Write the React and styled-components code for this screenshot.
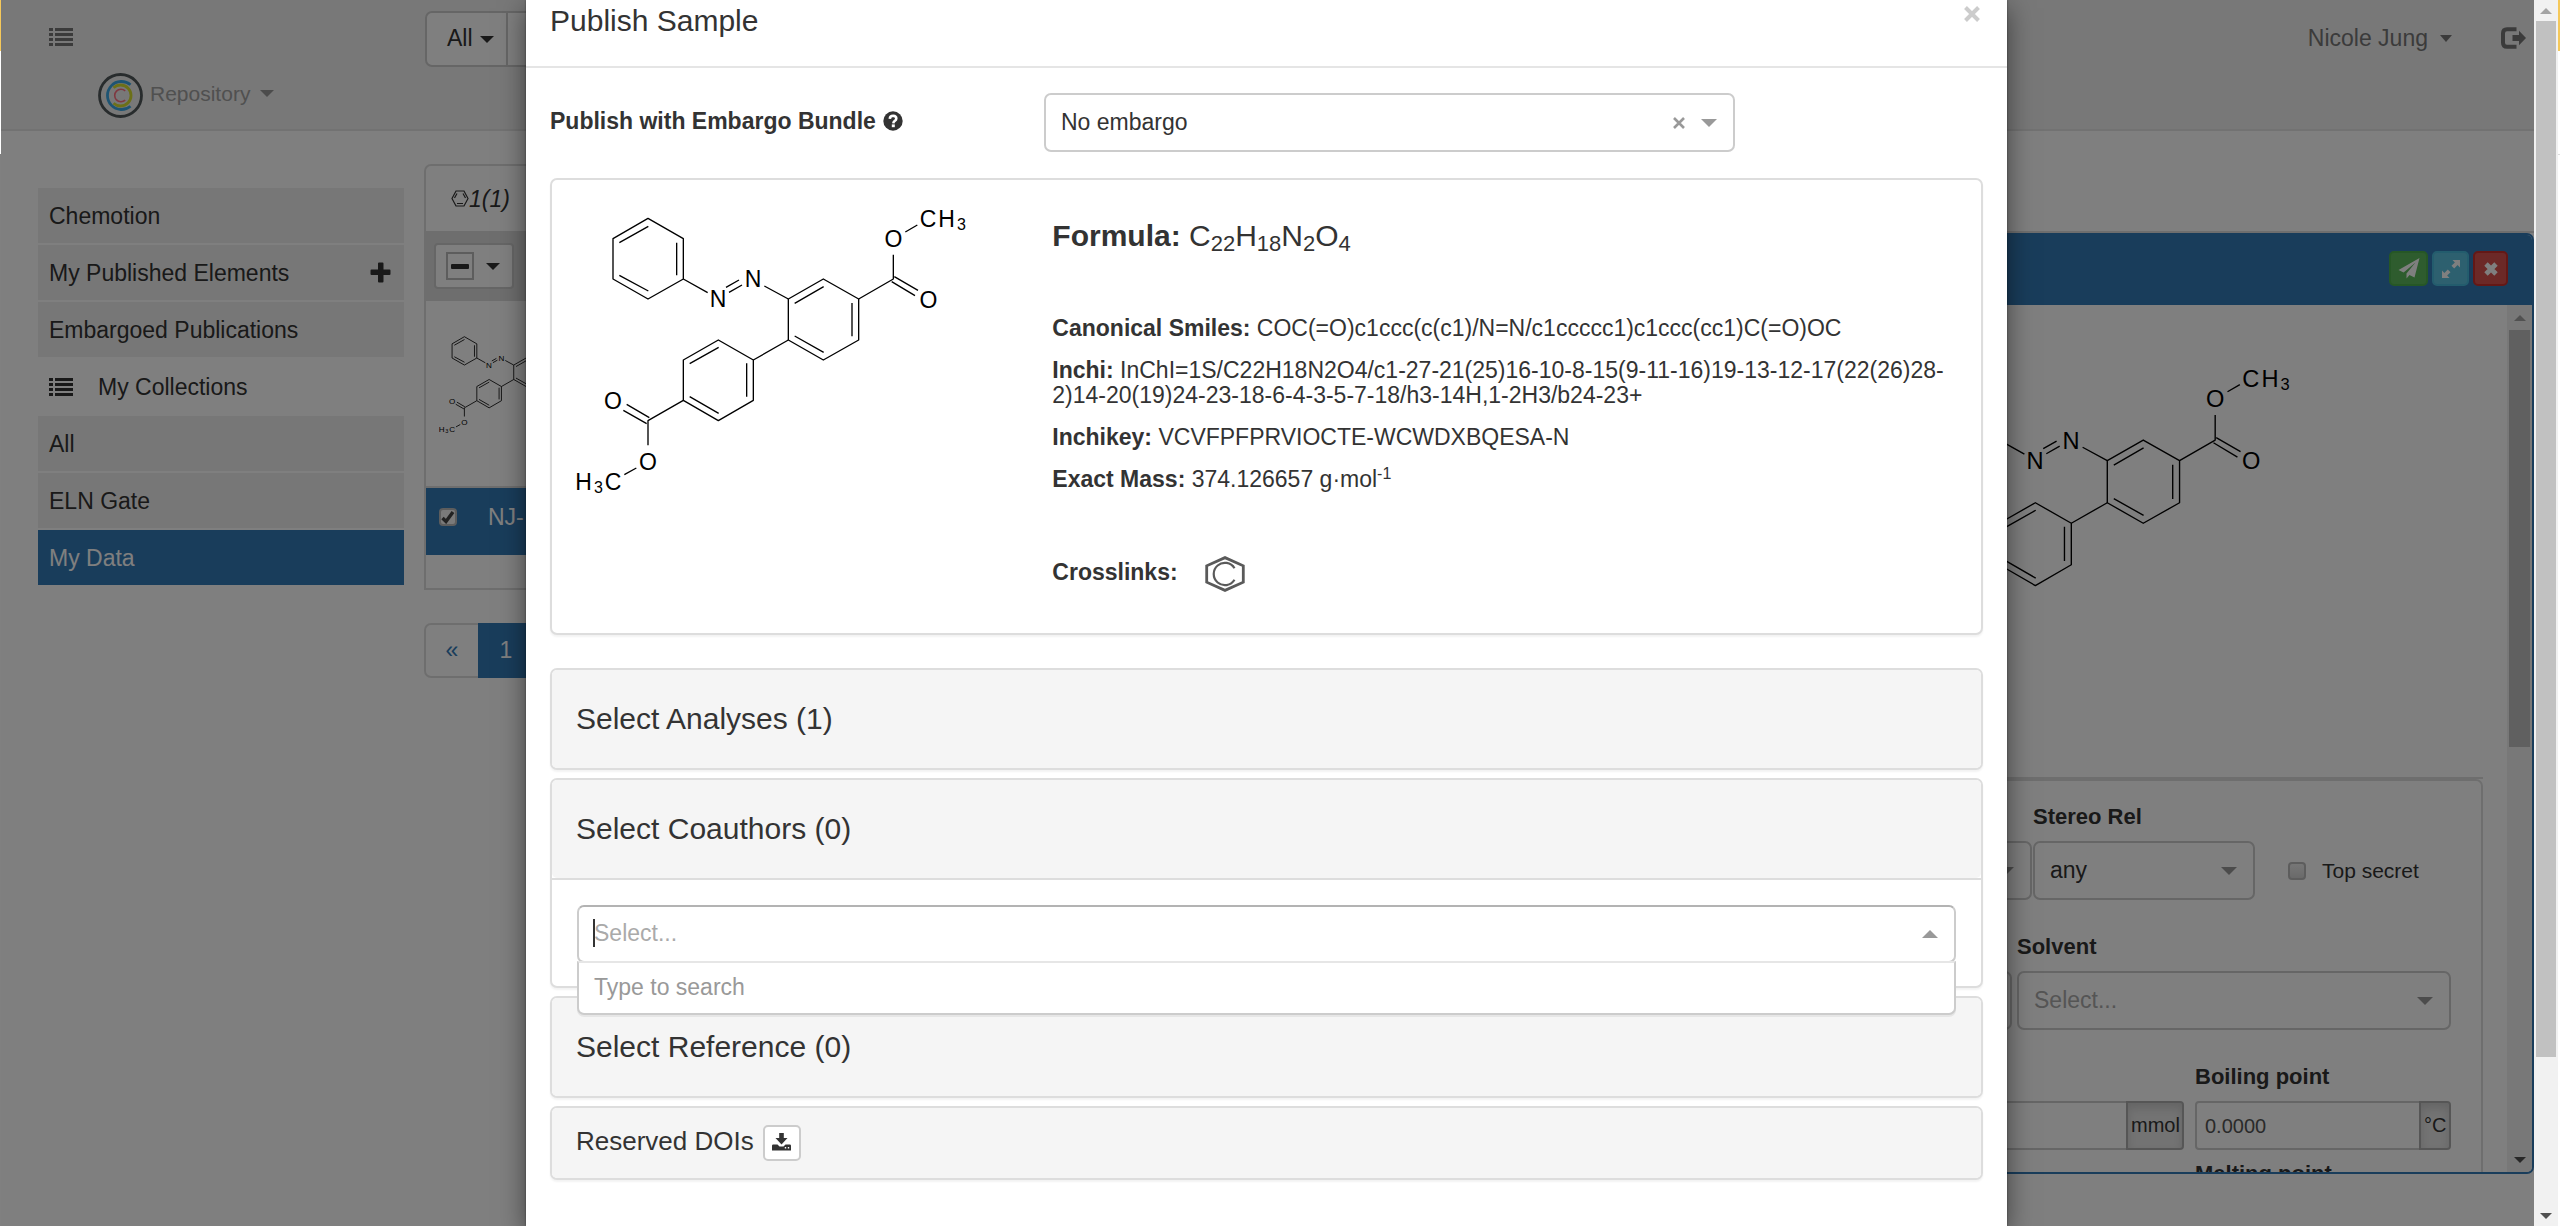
import React from 'react';
import styled, { createGlobalStyle, css } from 'styled-components';

const FONT = '"Liberation Sans", Arial, Helvetica, sans-serif';
const INK = '#333';
const BLUE = '#337ab7';

const GlobalStyle = createGlobalStyle`
  *, *::before, *::after { box-sizing: border-box; }
  html, body { margin: 0; height: 100%; background: #fff; }
  body { font-family: ${FONT}; font-size: 23px; line-height: 32px; color: ${INK}; overflow: hidden; }
  button, input, select { font: inherit; color: inherit; margin: 0; }
  button { cursor: pointer; }
  h1, h2, h3, h4, p { margin: 0; font-weight: 400; }
`;

/* ---------- window frame ---------- */

const Frame = styled.div`
  display: grid;
  grid-template-columns: 1px minmax(0, 1fr) 24px 2px;
  height: 100vh;
  overflow: hidden;
`;

const Edge = styled.div`
  display: flex;
  flex-direction: column;
  &::before { content: ''; height: 51px; background: #f5c85a; }
`;

const EdgeGap = styled.div`
  height: 103px;
  background: #fff;
`;

const EdgeRest = styled.div`
  flex: 1;
  background: ${(p) => (p.$dim ? '#808080' : '#fff')};
  border-top: ${(p) => (p.$dim ? 'none' : '1px solid #ddd')};
`;

const Page = styled.div`
  position: relative;
  display: flex;
  flex-direction: column;
  overflow: hidden;
`;

const Backdrop = styled.div`
  position: absolute;
  inset: 0;
  background: rgba(0, 0, 0, 0.5);
`;

/* ---------- scrollbars ---------- */

const Track = styled.div`
  display: flex;
  flex-direction: column;
  width: ${(p) => p.$width}px;
  padding: 0 2px;
  background: #f1f1f1;
`;

const TrackEnd = styled.div`
  display: flex;
  align-items: center;
  justify-content: center;
  height: ${(p) => p.$height}px;
`;

const Thumb = styled.div`
  flex: ${(p) => p.$share};
  background: #c1c1c1;
`;

const Spacer = styled.div`
  flex: ${(p) => p.$share};
`;

const Triangle = styled.span`
  display: inline-block;
  flex: none;
  border-left: ${(p) => p.$size}px solid transparent;
  border-right: ${(p) => p.$size}px solid transparent;
  ${(p) =>
    p.$up
      ? css`border-bottom: ${p.$tall || p.$size}px solid ${p.$color || INK};`
      : css`border-top: ${p.$tall || p.$size}px solid ${p.$color || INK};`}
`;

function Scrollbar({ width, end, thumb, rest }) {
  return (
    <Track $width={width} aria-hidden="true">
      <TrackEnd $height={end}><Triangle $up $size={6} $color="#a3a3a3" /></TrackEnd>
      <Thumb $share={thumb} />
      <Spacer $share={rest} />
      <TrackEnd $height={end}><Triangle $size={6} $color="#505050" /></TrackEnd>
    </Track>
  );
}

/* ---------- icons ---------- */

const Icon = styled.svg`
  display: block;
  flex: none;
  width: ${(p) => p.$w}px;
  height: ${(p) => p.$h}px;
  fill: currentColor;
`;

const ListIcon = () => (
  <Icon $w={24} $h={18} viewBox="0 0 24 18" aria-hidden="true">
    {[0, 5, 10, 15].map((y) => (
      <g key={y}>
        <rect x="0" y={y} width="4" height="3" />
        <rect x="6" y={y} width="18" height="3" />
      </g>
    ))}
  </Icon>
);

const PlusIcon = () => (
  <Icon $w={21} $h={21} viewBox="0 0 21 21" aria-hidden="true">
    <path d="M8 1.5Q8 .5 9 .5H12.500Q13.500 .5 13.500 1.500V7.500H19.500Q20.500 7.500 20.500 8.500V12Q20.500 13 19.500 13H13.500V19.500Q13.500 20.500 12.500 20.500H9Q8 20.500 8 19.500V13H1.500Q.5 13 .5 12V8.500Q.5 7.500 1.500 7.500H8Z" />
  </Icon>
);

const LogoutIcon = () => (
  <Icon $w={25} $h={22} viewBox="0 0 25 22" aria-hidden="true">
    <path d="M15.500 2.200H6Q2 2.200 2 6.200V15.800Q2 19.800 6 19.800H15.500" fill="none" stroke="currentColor" strokeWidth="4" />
    <path d="M11.500 8H18V3.800L25 11L18 18.200V14H11.500Z" />
  </Icon>
);

const QuestionIcon = () => (
  <Icon $w={20} $h={20} viewBox="0 0 20 20" aria-hidden="true">
    <circle cx="10" cy="10" r="9.700" />
    <path d="M6.800 7.800Q7 4.800 10.200 4.800Q13.300 5 13.300 7.500Q13.300 9 11.800 9.900Q10.500 10.700 10.300 12.300" fill="none" stroke="#fff" strokeWidth="2.600" />
    <rect x="8.800" y="13.400" width="3" height="2.800" fill="#fff" />
  </Icon>
);

const PlaneIcon = () => (
  <Icon $w={22} $h={21} viewBox="0 0 22 21" aria-hidden="true">
    <path d="M21.500 0L.5 12L5.600 14.400L17.500 4.500L8.500 15.500V20.500L11.500 17L16.500 19.500Z" />
  </Icon>
);

const ExpandIcon = () => (
  <Icon $w={18} $h={18} viewBox="0 0 18 18" aria-hidden="true">
    <path d="M10.500 0H18V7.500L15.600 5.100L12.200 8.500L9.500 5.800L12.900 2.400Z" />
    <path d="M7.500 18H0V10.500L2.400 12.900L5.800 9.500L8.500 12.200L5.100 15.600Z" />
  </Icon>
);

const CrossIcon = () => (
  <Icon $w={14} $h={14} viewBox="0 0 14 14" aria-hidden="true">
    <path d="M2 2L12 12M12 2L2 12" stroke="currentColor" strokeWidth="4.800" />
  </Icon>
);

const ThinCrossIcon = () => (
  <Icon $w={12} $h={12} viewBox="0 0 12 12" aria-hidden="true">
    <path d="M1 1L11 11M11 1L1 11" stroke="currentColor" strokeWidth="2.600" />
  </Icon>
);

const CloseIcon = () => (
  <Icon $w={16} $h={16} viewBox="0 0 16 16" aria-hidden="true">
    <path d="M1.500 1.500L14.500 14.500M14.500 1.500L1.500 14.500" stroke="currentColor" strokeWidth="4" />
  </Icon>
);

const DownloadIcon = () => (
  <Icon $w={19} $h={18} viewBox="0 0 19 18" aria-hidden="true">
    <path d="M7.200 0H11.800V5H15.500L9.500 11.500L3.500 5H7.200Z" />
    <path d="M1.200 11.500H5.500L7.500 13.500H11.500L13.500 11.500H17.800Q19 11.500 19 12.700V17.500H0V12.700Q0 11.500 1.200 11.500Z" />
    <path d="M12.800 14H14.200V15.500H12.800ZM15.800 14H17.200V15.500H15.800Z" fill="#fff" />
  </Icon>
);

const TickIcon = () => (
  <Icon $w={14} $h={14} viewBox="0 0 14 14" aria-hidden="true">
    <path d="M1.500 8L5 11.500L12 2" fill="none" stroke="currentColor" strokeWidth="3.400" />
  </Icon>
);

const BenzeneIcon = () => (
  <Icon $w={18} $h={17} viewBox="0 0 18 17" aria-hidden="true">
    <path d="M5 1H13L17 8.500L13 16H5L1 8.500Z" fill="none" stroke="currentColor" strokeWidth="1.200" />
    <path d="M6 13.500H12M3.500 8L6 3.500M12 3.500L14.500 8" fill="none" stroke="currentColor" strokeWidth="1.200" />
  </Icon>
);

const HexagonCIcon = () => (
  <Icon $w={40} $h={36} viewBox="0 0 40 36" aria-hidden="true">
    <path d="M20 1.600L38.300 9.800V26.200L20 34.400L1.700 26.200V9.800Z" fill="none" stroke="#5a5a5a" strokeWidth="2.800" />
    <path d="M29.500 12.200A11.200 11.200 0 1 0 29.500 23.800" fill="none" stroke="#5a5a5a" strokeWidth="2.200" />
  </Icon>
);

const Logo = () => (
  <Icon $w={45} $h={45} viewBox="0 0 45 45" aria-hidden="true">
    <g fill="none">
      <circle cx="22.500" cy="22.500" r="21" stroke="#50585a" strokeWidth="2.800" />
      <path d="M32.500 11.800A14 14 0 1 0 32.500 33.200" stroke="#3da9e6" strokeWidth="2.800" />
      <path d="M15.500 14.700A10.500 10.500 0 1 1 15.500 30.300" stroke="#d8e030" strokeWidth="2.800" />
      <path d="M27.200 17.800A6.300 6.300 0 1 0 27.200 27.200" stroke="#ff7080" strokeWidth="1.600" />
    </g>
  </Icon>
);

/* ---------- molecule drawing ---------- */

const BONDS = [
  // phenyl ring
  'M324 115L430 176V297L324 357L219 297V176Z',
  'M325 139L238 188M410 188V286M325 333L238 286',
  // azo bridge
  'M430 297L503 338M558 322L597 300M567 337L606 315M673 318L745 357',
  // upper right ring
  'M745 357L850 297L956 357V480L850 540L745 480Z',
  'M764 370L851 320M936 369V469M764 468L851 517',
  // right ester
  'M956 357L1060 297V224M1096 156L1132 135',
  'M1055 305L1125 347M1063 290L1134 331',
  // lower left ring
  'M745 480L640 540V661L535 722L430 661V540L535 480L640 540',
  'M449 551L536 502M620 550V650M449 650L536 700',
  // left ester
  'M430 661L324 722V796M289 864L253 884',
  'M250 691L320 731M260 673L328 713',
];

const ATOMS = [
  [534, 382, 'N'], [639, 322, 'N'],
  [1060, 200, 'O'], [1165, 383, 'O'], [219, 686, 'O'], [324, 869, 'O'],
  [1164, 141, 'C'], [1220, 141, 'H'], [1264, 150, '3', true],
  [131, 931, 'H'], [175, 938, '3', true], [219, 931, 'C'],
];

const MoleculeSvg = styled.svg`
  display: block;
  flex: none;
  width: ${(p) => p.$width}px;
  height: ${(p) => p.$height}px;
  font-family: ${FONT};
  stroke-linejoin: round;
`;

function Molecule({ width, height, stroke = 4 }) {
  return (
    <MoleculeSvg $width={width} $height={height} viewBox="108 75 1176 870" role="img" aria-label="C22H18N2O4">
      <g fill="none" stroke="#000" strokeWidth={stroke}>
        {BONDS.map((d) => <path key={d} d={d} />)}
      </g>
      {ATOMS.map(([x, y, label, small]) => (
        <text key={`${x}-${y}`} x={x} y={y} fontSize={small ? 48 : 69} textAnchor="middle">{label}</text>
      ))}
    </MoleculeSvg>
  );
}

/* ---------- top bar ---------- */

const Navbar = styled.header`
  display: flex;
  align-items: flex-start;
  height: 131px;
  background: #f0f0f0;
  border-bottom: 2px solid #e4e4e4;
`;

const Brand = styled.div`
  display: flex;
  flex-direction: column;
  gap: 27px;
  width: 424px;
  padding: 28px 0 0 48px;
  color: #777;
`;

const GhostButton = styled.button`
  display: flex;
  align-items: center;
  padding: 0;
  border: 0;
  background: none;
  color: ${(p) => p.$color || 'inherit'};
  font-size: ${(p) => p.$font || 23}px;
  gap: ${(p) => p.$gap || 0}px;
`;

const RepositoryLink = styled.a`
  display: flex;
  align-items: center;
  margin-left: 49px;
  gap: 7px;
  font-size: 21px;
  line-height: 41px;
  padding-bottom: 4px;
  color: #a0a0a0;
  text-decoration: none;
  svg { margin-bottom: -4px; }
  span { margin-left: 3px; }
`;

const SearchGroup = styled.div`
  display: flex;
  flex: 1;
  padding-top: 11px;
`;

const SearchScope = styled.button`
  display: flex;
  align-items: center;
  gap: 7px;
  width: 83px;
  height: 56px;
  padding: 0 0 3px 20px;
  border: 2px solid #ccc;
  border-radius: 7px 0 0 7px;
  background: #fff;
  span { margin-top: 3px; }
`;

const SearchInput = styled.input`
  width: 500px;
  height: 56px;
  margin-left: -2px;
  border: 2px solid #ccc;
  background: #fff;
`;

const UserArea = styled.div`
  display: flex;
  align-items: center;
  gap: 49px;
  padding: 22px 8px 0 0;
  color: #777;
`;

/* ---------- page columns ---------- */

const Main = styled.main`
  display: flex;
  flex: 1;
  min-height: 0;
  gap: 20px;
  padding: 0 0 52px 37px;
`;

const Sidebar = styled.nav`
  display: flex;
  flex-direction: column;
  gap: 2px;
  width: 366px;
  padding-top: 57px;
`;

const CollectionLink = styled.a`
  display: flex;
  align-items: center;
  justify-content: space-between;
  height: 55px;
  padding: 0 13px 0 11px;
  background: ${(p) => (p.$active ? BLUE : '#eee')};
  color: ${(p) => (p.$active ? '#fff' : INK)};
  text-decoration: none;
`;

const CollectionHeading = styled.h2`
  display: flex;
  align-items: center;
  gap: 25px;
  height: 55px;
  padding-left: 11px;
  font-size: 23px;
`;

const ListColumn = styled.section`
  flex: 1;
  padding-top: 33px;
`;

const ListPanel = styled.div`
  border: 2px solid #ddd;
  border-radius: 7px 7px 0 0;
  background: #fff;
`;

const ListTab = styled.button`
  display: flex;
  align-items: center;
  height: 65px;
  padding: 0 0 0 25px;
  border: 0;
  background: none;
  font-style: italic;
`;

const ListToolbar = styled.div`
  display: flex;
  align-items: center;
  height: 70px;
  margin-left: -2px;
  padding: 0 10px;
  background: #ddd;
`;

const SelectAll = styled.button`
  display: flex;
  align-items: center;
  gap: 12px;
  width: 80px;
  height: 46px;
  padding: 0 0 0 10px;
  border: 2px solid #ccc;
  border-radius: 4px;
  background: #fff;
`;

const MinusBox = styled.span`
  display: flex;
  align-items: center;
  justify-content: center;
  width: 28px;
  height: 28px;
  border: 2px solid #bbb;
  &::before { content: ''; width: 18px; height: 5px; border-radius: 1px; background: ${INK}; }
`;

const ThumbCell = styled.div`
  height: 187px;
  padding: 31px 0 0 13px;
  border-bottom: 2px solid #ddd;
`;

const SampleRow = styled.div`
  display: flex;
  align-items: center;
  gap: 31px;
  height: 67px;
  padding: 0 0 9px 13px;
  background: ${BLUE};
  color: #fff;
`;

const Tick = styled.label`
  display: inline-grid;
  place-items: center;
  width: 18px;
  height: 18px;
  color: #444;
  input, svg { grid-area: 1 / 1; }
  svg { pointer-events: none; }
`;

const Checkbox = styled.input`
  appearance: none;
  width: 18px;
  height: 18px;
  border: 2px solid #bbb;
  border-radius: 4px;
  background: ${(p) => (p.$plain ? 'linear-gradient(#eee, #d4d4d4)' : '#f4f4f4')};
`;

const ListFoot = styled.div`
  height: 33px;
`;

const Pagination = styled.div`
  display: flex;
  margin-top: 33px;
`;

const PageButton = styled.button`
  width: 56px;
  height: 55px;
  padding: 0 0 2px;
  border: 2px solid ${(p) => (p.$active ? BLUE : '#ddd')};
  border-radius: ${(p) => (p.$active ? '0' : '7px 0 0 7px')};
  margin-right: -2px;
  background: ${(p) => (p.$active ? BLUE : '#fff')};
  color: ${(p) => (p.$active ? '#fff' : BLUE)};
`;

/* ---------- detail pane ---------- */

const DetailColumn = styled.section`
  display: flex;
  flex: 2;
  flex-direction: column;
  padding-top: 100px;
`;

const DetailWrap = styled.div`
  display: flex;
  flex: 1;
  min-height: 0;
  border-top: 2px solid #ddd;
`;

const DetailPanel = styled.div`
  display: flex;
  flex: 1;
  flex-direction: column;
  overflow: hidden;
  border: 2px solid ${BLUE};
  border-radius: 7px;
  background: #fff;
`;

const DetailHeader = styled.div`
  display: flex;
  align-items: center;
  justify-content: flex-end;
  height: 70px;
  padding: 0 24px 3px 0;
  background: ${BLUE};
`;

const TONES = {
  green: ['#5cb85c', '#4cae4c'],
  cyan: ['#5bc0de', '#46b8da'],
  red: ['#d9534f', '#c9302c'],
};

const ToolButton = styled.button`
  display: flex;
  align-items: center;
  justify-content: center;
  width: ${(p) => p.$width}px;
  height: 35px;
  margin-left: 4px;
  padding: 0;
  border: 2px solid ${(p) => TONES[p.$tone][1]};
  border-radius: 5px;
  background: ${(p) => TONES[p.$tone][0]};
  color: #fff;
`;

const DetailBody = styled.div`
  display: flex;
  flex: 1;
  min-height: 0;
`;

const DetailContent = styled.div`
  flex: 1;
  overflow: hidden;
`;

const Structure = styled.div`
  display: flex;
  justify-content: flex-end;
  height: 472px;
  padding: 59px 215px 0 0;
`;

const FormWrap = styled.div`
  margin-right: 24px;
  border-top: 2px solid #ddd;
`;

const Form = styled.form`
  padding: 20px 30px 0 20px;
  border: 2px solid #ddd;
  border-radius: 7px 7px 0 0;
`;

const FormRow = styled.div`
  display: flex;
  align-items: flex-end;
  gap: ${(p) => p.$gap}px;
  margin-bottom: ${(p) => p.$after || 31}px;
`;

const Field = styled.div`
  flex: ${(p) => (p.$width ? 'none' : 1)};
  width: ${(p) => (p.$width ? `${p.$width}px` : 'auto')};
`;

const FieldLabel = styled.label`
  display: block;
  margin-bottom: 8px;
  font-size: 22px;
  font-weight: 700;
`;

const SelectBox = styled.div`
  display: flex;
  align-items: center;
  height: 59px;
  padding-right: 16px;
  border: 2px solid #ccc;
  border-radius: 7px;
  background: #fff;
  color: ${(p) => (p.$empty ? '#aaa' : INK)};
  select, input {
    appearance: none;
    flex: 1;
    min-width: 0;
    height: 100%;
    padding: 0 0 1px 15px;
    border: 0;
    outline: 0;
    background: none;
  }
`;

const InputGroup = styled.div`
  display: flex;
  height: 49px;
  font-size: 20px;
`;

const GroupInput = styled.input`
  flex: 1;
  min-width: 0;
  padding: 0 0 0 8px;
  border: 2px solid #ccc;
  border-radius: 4px 0 0 4px;
  background: #fff;
  color: #555;
`;

const Unit = styled.button`
  margin-left: -2px;
  padding: 0 3px 2px;
  width: ${(p) => p.$width}px;
  border: 2px solid #adadad;
  border-radius: 0 4px 4px 0;
  background: #e6e6e6;
  box-shadow: inset 0 5px 8px rgba(0, 0, 0, 0.125);
`;

const SecretArea = styled.label`
  display: flex;
  align-items: center;
  gap: 16px;
  width: 195px;
  height: 59px;
  padding-left: 32px;
  font-size: 21px;
`;

/* ---------- modal ---------- */

const ModalLayer = styled.div`
  position: absolute;
  inset: 0;
  display: flex;
  justify-content: center;
  padding-right: 2px;
`;

const Dialog = styled.section`
  width: 100%;
  max-width: 1481px;
  min-height: 100%;
  background: #fff;
  box-shadow: 0 0 2px rgba(0, 0, 0, 0.4), 0 8px 25px rgba(0, 0, 0, 0.5);
`;

const ModalHeader = styled.div`
  display: flex;
  justify-content: space-between;
  height: 68px;
  padding: 0 27px 0 24px;
  border-bottom: 2px solid #e5e5e5;
`;

const ModalTitle = styled.h1`
  font-size: 30px;
  line-height: 42px;
`;

const CloseButton = styled(GhostButton)`
  height: 28px;
`;

const ModalBody = styled.div`
  padding: 25px 24px 45px;
`;

const EmbargoRow = styled.div`
  display: grid;
  grid-template-columns: 494px minmax(0, 691px);
  margin-bottom: 26px;
`;

const EmbargoLabel = styled.label`
  display: flex;
  align-items: center;
  gap: 7px;
  padding-bottom: 3px;
  font-weight: 700;
`;

const ClearButton = styled(GhostButton)`
  margin-right: 16px;
`;

const Panel = styled.section`
  margin-bottom: ${(p) => p.$after || 8}px;
  border: 2px solid #ddd;
  border-radius: 7px;
  background: #fff;
  box-shadow: 0 2px 2px rgba(0, 0, 0, 0.05);
`;

const SampleGrid = styled.div`
  display: grid;
  grid-template-columns: 1fr 2fr;
  padding: 25px 0 41px;
`;

const SampleCell = styled.div`
  padding: 0 24px;
`;

const Info = styled(SampleCell)`
  padding-top: 14px;
  line-height: 25px;
  p { margin-bottom: 17px; overflow-wrap: break-word; }
`;

const Formula = styled.h2`
  margin-bottom: 64px;
  font-size: 30px;
  line-height: 33px;
  sub { font-size: 22px; line-height: 0; vertical-align: -5px; }
`;

const Sup = styled.sup`
  font-size: 16px;
  line-height: 0;
  vertical-align: 8px;
`;

const Crosslinks = styled.div`
  display: flex;
  gap: 27px;
  margin-top: 64px;
  line-height: 32px;
`;

const PanelHeading = styled.h3`
  padding: 0 24px;
  border-radius: 5px;
  background: #f5f5f5;
  font-size: 30px;
  line-height: 98px;
  cursor: pointer;
`;

const PanelBody = styled.div`
  padding: 25px 25px 23px;
  border-top: 2px solid #ddd;
`;

const Combo = styled.div`
  position: relative;
`;

const ComboBox = styled(SelectBox)`
  height: 58px;
  border-color: #b3b3b3 #ccc #ccc;
  input::placeholder { color: #aaa; opacity: 1; }
`;

const TextCursor = styled.span`
  position: absolute;
  top: 14px;
  left: 16px;
  width: 2px;
  height: 28px;
  background: #333;
`;

const ComboMenu = styled.div`
  position: absolute;
  top: 56px;
  left: 0;
  right: 0;
  z-index: 1;
  padding: 8px 15px 10px;
  border: 2px solid #ccc;
  border-top-color: #e6e6e6;
  border-radius: 0 0 7px 7px;
  background: #fff;
  color: #999;
  box-shadow: 0 2px 0 rgba(0, 0, 0, 0.06);
`;

const DoiHeading = styled.h3`
  display: flex;
  align-items: center;
  gap: 9px;
  height: 70px;
  padding: 0 24px;
  border-radius: 5px;
  background: #f5f5f5;
  font-size: 26px;
  span { padding-bottom: 4px; }
`;

const DownloadButton = styled.button`
  display: flex;
  align-items: center;
  justify-content: center;
  width: 38px;
  height: 36px;
  padding: 0 0 2px;
  border: 2px solid #ccc;
  border-radius: 5px;
  background: #fff;
`;

function Caret(props) {
  return <Triangle $size={8} $tall={8} $color="#999" {...props} />;
}

function Collections() {
  return (
    <Sidebar>
      <CollectionLink href="#chemotion">Chemotion</CollectionLink>
      <CollectionLink href="#published">My Published Elements<PlusIcon /></CollectionLink>
      <CollectionLink href="#embargoed">Embargoed Publications</CollectionLink>
      <CollectionHeading><ListIcon />My Collections</CollectionHeading>
      <CollectionLink href="#all">All</CollectionLink>
      <CollectionLink href="#gate">ELN Gate</CollectionLink>
      <CollectionLink href="#data" $active>My Data</CollectionLink>
    </Sidebar>
  );
}

function SampleList() {
  return (
    <ListColumn>
      <ListPanel>
        <ListTab><BenzeneIcon />1(1)</ListTab>
        <ListToolbar>
          <SelectAll aria-label="Selection"><MinusBox /><Triangle $size={7} $tall={7} /></SelectAll>
        </ListToolbar>
        <ThumbCell><Molecule width={138} height={102} stroke={7} /></ThumbCell>
        <SampleRow>
          <Tick>
            <Checkbox type="checkbox" defaultChecked aria-label="NJ-" />
            <TickIcon />
          </Tick>
          NJ-
        </SampleRow>
        <ListFoot />
      </ListPanel>
      <Pagination>
        <PageButton>«</PageButton>
        <PageButton $active>1</PageButton>
      </Pagination>
    </ListColumn>
  );
}

function SampleDetail() {
  return (
    <DetailColumn>
      <DetailWrap>
        <DetailPanel>
          <DetailHeader>
            <ToolButton $tone="green" $width={39} aria-label="Publish"><PlaneIcon /></ToolButton>
            <ToolButton $tone="cyan" $width={37} aria-label="Expand"><ExpandIcon /></ToolButton>
            <ToolButton $tone="red" $width={35} aria-label="Close"><CrossIcon /></ToolButton>
          </DetailHeader>
          <DetailBody>
            <DetailContent>
              <Structure><Molecule width={403} height={298} /></Structure>
              <FormWrap>
                <Form>
                  <FormRow $gap={1}>
                    <Field>
                      <SelectBox><select aria-label="Stereo Abs" /><Caret /></SelectBox>
                    </Field>
                    <Field $width={222}>
                      <FieldLabel htmlFor="stereo">Stereo Rel</FieldLabel>
                      <SelectBox>
                        <select id="stereo"><option>any</option></select>
                        <Caret />
                      </SelectBox>
                    </Field>
                    <SecretArea>
                      <Checkbox $plain type="checkbox" />Top secret
                    </SecretArea>
                  </FormRow>
                  <FormRow $gap={5}>
                    <Field>
                      <SelectBox><select aria-label="Boundary" /></SelectBox>
                    </Field>
                    <Field $width={434}>
                      <FieldLabel htmlFor="solvent">Solvent</FieldLabel>
                      <SelectBox $empty>
                        <select id="solvent"><option>Select...</option></select>
                        <Caret />
                      </SelectBox>
                    </Field>
                  </FormRow>
                  <FormRow $gap={11} $after={8}>
                    <Field>
                      <InputGroup>
                        <GroupInput aria-label="Amount" />
                        <Unit type="button" $width={58}>mmol</Unit>
                      </InputGroup>
                    </Field>
                    <Field $width={256}>
                      <FieldLabel htmlFor="boiling">Boiling point</FieldLabel>
                      <InputGroup>
                        <GroupInput id="boiling" defaultValue="0.0000" />
                        <Unit type="button" $width={32}>°C</Unit>
                      </InputGroup>
                    </Field>
                  </FormRow>
                  <FormRow $gap={11}>
                    <Field />
                    <Field $width={256}>
                      <FieldLabel htmlFor="melting">Melting point</FieldLabel>
                      <InputGroup>
                        <GroupInput id="melting" />
                      </InputGroup>
                    </Field>
                  </FormRow>
                </Form>
              </FormWrap>
            </DetailContent>
            <Scrollbar width={25} end={25} thumb={51} rest={49} />
          </DetailBody>
        </DetailPanel>
      </DetailWrap>
    </DetailColumn>
  );
}

function SampleSummary() {
  return (
    <Panel $after={33}>
      <SampleGrid>
        <SampleCell><Molecule width={392} height={290} /></SampleCell>
        <Info>
          <Formula>
            <b>Formula:</b> C<sub>22</sub>H<sub>18</sub>N<sub>2</sub>O<sub>4</sub>
          </Formula>
          <p><b>Canonical Smiles:</b> COC(=O)c1ccc(c(c1)/N=N/c1ccccc1)c1ccc(cc1)C(=O)OC</p>
          <p>
            <b>Inchi:</b> InChI=1S/C22H18N2O4/c1-27-21(25)16-10-8-15(9-11-16)19-13-12-17(22(26)28-2)14-20(19)24-23-18-6-4-3-5-7-18/h3-14H,1-2H3/b24-23+
          </p>
          <p><b>Inchikey:</b> VCVFPFPRVIOCTE-WCWDXBQESA-N</p>
          <p><b>Exact Mass:</b> 374.126657 g·mol<Sup>-1</Sup></p>
          <Crosslinks><b>Crosslinks:</b><HexagonCIcon /></Crosslinks>
        </Info>
      </SampleGrid>
    </Panel>
  );
}

function PublishDialog() {
  return (
    <ModalLayer>
      <Dialog role="dialog" aria-labelledby="publish-title">
        <ModalHeader>
          <ModalTitle id="publish-title">Publish Sample</ModalTitle>
          <CloseButton $color="#ccc" aria-label="Close"><CloseIcon /></CloseButton>
        </ModalHeader>
        <ModalBody>
          <EmbargoRow>
            <EmbargoLabel htmlFor="embargo">Publish with Embargo Bundle <QuestionIcon /></EmbargoLabel>
            <SelectBox>
              <select id="embargo"><option>No embargo</option></select>
              <ClearButton $color="#999" aria-label="Clear"><ThinCrossIcon /></ClearButton>
              <Caret />
            </SelectBox>
          </EmbargoRow>
          <SampleSummary />
          <Panel><PanelHeading>Select Analyses (1)</PanelHeading></Panel>
          <Panel>
            <PanelHeading>Select Coauthors (0)</PanelHeading>
            <PanelBody>
              <Combo>
                <ComboBox>
                  <input type="text" placeholder="Select..." aria-label="Select Coauthors" />
                  <Caret $up />
                </ComboBox>
                <TextCursor />
                <ComboMenu>Type to search</ComboMenu>
              </Combo>
            </PanelBody>
          </Panel>
          <Panel><PanelHeading>Select Reference (0)</PanelHeading></Panel>
          <Panel>
            <DoiHeading>
              <span>Reserved DOIs</span>
              <DownloadButton aria-label="Download"><DownloadIcon /></DownloadButton>
            </DoiHeading>
          </Panel>
        </ModalBody>
      </Dialog>
    </ModalLayer>
  );
}

export default function App() {
  return (
    <>
      <GlobalStyle />
      <Frame>
        <Edge><EdgeGap /><EdgeRest $dim /></Edge>
        <Page>
          <Navbar>
            <Brand>
              <GhostButton aria-label="Collections"><ListIcon /></GhostButton>
              <RepositoryLink href="#repository">
                <Logo />Repository<Triangle $size={7} $tall={7} $color="#999" />
              </RepositoryLink>
            </Brand>
            <SearchGroup>
              <SearchScope>All<Triangle $size={7} $tall={7} /></SearchScope>
              <SearchInput aria-label="Search" />
            </SearchGroup>
            <UserArea>
              <GhostButton $gap={12}>Nicole Jung<Triangle $size={6} $tall={7} $color="#777" /></GhostButton>
              <GhostButton aria-label="Log out"><LogoutIcon /></GhostButton>
            </UserArea>
          </Navbar>
          <Main>
            <Collections />
            <SampleList />
            <SampleDetail />
          </Main>
          <Backdrop />
          <PublishDialog />
        </Page>
        <Scrollbar width={24} end={21} thumb={7} rest={1} />
        <Edge><EdgeGap /><EdgeRest /></Edge>
      </Frame>
    </>
  );
}
